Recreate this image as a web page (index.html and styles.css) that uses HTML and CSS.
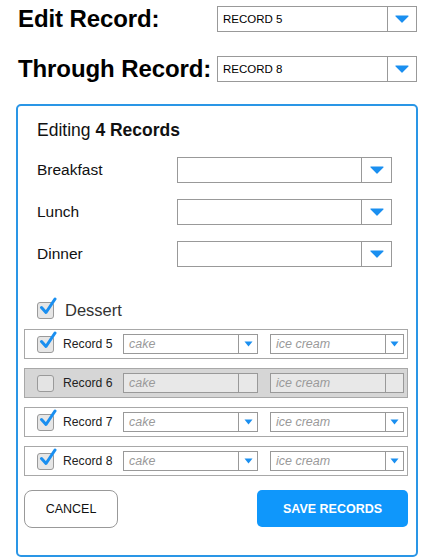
FILE: index.html
```html
<!DOCTYPE html>
<html>
<head>
<meta charset="utf-8">
<link rel="stylesheet" href="styles.css">
</head>
<body>
<div class="top">
  <div class="top-row">
    <div class="top-label">Edit Record:</div>
    <div class="select big"><span class="value">RECORD 5</span><span class="btn"><svg width="14" height="8" viewBox="0 0 14 8"><path d="M1 1 H13 L7 7 Z" fill="#1a8ff0" stroke="#1a8ff0" stroke-linejoin="round" stroke-width="1.2"/></svg></span></div>
  </div>
  <div class="top-row">
    <div class="top-label">Through Record:</div>
    <div class="select big"><span class="value">RECORD 8</span><span class="btn"><svg width="14" height="8" viewBox="0 0 14 8"><path d="M1 1 H13 L7 7 Z" fill="#1a8ff0" stroke="#1a8ff0" stroke-linejoin="round" stroke-width="1.2"/></svg></span></div>
  </div>
</div>

<div class="panel">
  <div class="title">Editing <b>4 Records</b></div>

  <div class="form">
    <div class="form-row">
      <div class="form-label">Breakfast</div>
      <div class="select mid"><span class="value"></span><span class="btn"><svg width="14" height="8" viewBox="0 0 14 8"><path d="M1 1 H13 L7 7 Z" fill="#1a8ff0" stroke="#1a8ff0" stroke-linejoin="round" stroke-width="1.2"/></svg></span></div>
    </div>
    <div class="form-row">
      <div class="form-label">Lunch</div>
      <div class="select mid"><span class="value"></span><span class="btn"><svg width="14" height="8" viewBox="0 0 14 8"><path d="M1 1 H13 L7 7 Z" fill="#1a8ff0" stroke="#1a8ff0" stroke-linejoin="round" stroke-width="1.2"/></svg></span></div>
    </div>
    <div class="form-row">
      <div class="form-label">Dinner</div>
      <div class="select mid"><span class="value"></span><span class="btn"><svg width="14" height="8" viewBox="0 0 14 8"><path d="M1 1 H13 L7 7 Z" fill="#1a8ff0" stroke="#1a8ff0" stroke-linejoin="round" stroke-width="1.2"/></svg></span></div>
    </div>
  </div>

  <div class="dessert">
    <span class="cb checked"><svg class="tick" width="18" height="19" viewBox="0 0 18 19"><path d="M2.5 10.5 L7 15.5 L16 2" fill="none" stroke="#1a8ff0" stroke-width="3" stroke-linecap="round" stroke-linejoin="round"/></svg></span>
    <span class="dessert-label">Dessert</span>
  </div>

  <div class="records">
    <div class="rec">
      <span class="cb checked"><svg class="tick" width="18" height="19" viewBox="0 0 18 19"><path d="M2.5 10.5 L7 15.5 L16 2" fill="none" stroke="#1a8ff0" stroke-width="3" stroke-linecap="round" stroke-linejoin="round"/></svg></span>
      <span class="rec-label">Record 5</span>
      <div class="select small s1"><span class="value ph">cake</span><span class="btn"><svg width="9" height="6" viewBox="0 0 9 6"><path d="M0.5 0.5 H8.5 L4.5 5.5 Z" fill="#1a8ff0"/></svg></span></div>
      <div class="select small s2"><span class="value ph">ice cream</span><span class="btn"><svg width="9" height="6" viewBox="0 0 9 6"><path d="M0.5 0.5 H8.5 L4.5 5.5 Z" fill="#1a8ff0"/></svg></span></div>
    </div>
    <div class="rec disabled">
      <span class="cb"></span>
      <span class="rec-label">Record 6</span>
      <div class="select small s1"><span class="value ph">cake</span><span class="btn"></span></div>
      <div class="select small s2"><span class="value ph">ice cream</span><span class="btn"></span></div>
    </div>
    <div class="rec">
      <span class="cb checked"><svg class="tick" width="18" height="19" viewBox="0 0 18 19"><path d="M2.5 10.5 L7 15.5 L16 2" fill="none" stroke="#1a8ff0" stroke-width="3" stroke-linecap="round" stroke-linejoin="round"/></svg></span>
      <span class="rec-label">Record 7</span>
      <div class="select small s1"><span class="value ph">cake</span><span class="btn"><svg width="9" height="6" viewBox="0 0 9 6"><path d="M0.5 0.5 H8.5 L4.5 5.5 Z" fill="#1a8ff0"/></svg></span></div>
      <div class="select small s2"><span class="value ph">ice cream</span><span class="btn"><svg width="9" height="6" viewBox="0 0 9 6"><path d="M0.5 0.5 H8.5 L4.5 5.5 Z" fill="#1a8ff0"/></svg></span></div>
    </div>
    <div class="rec">
      <span class="cb checked"><svg class="tick" width="18" height="19" viewBox="0 0 18 19"><path d="M2.5 10.5 L7 15.5 L16 2" fill="none" stroke="#1a8ff0" stroke-width="3" stroke-linecap="round" stroke-linejoin="round"/></svg></span>
      <span class="rec-label">Record 8</span>
      <div class="select small s1"><span class="value ph">cake</span><span class="btn"><svg width="9" height="6" viewBox="0 0 9 6"><path d="M0.5 0.5 H8.5 L4.5 5.5 Z" fill="#1a8ff0"/></svg></span></div>
      <div class="select small s2"><span class="value ph">ice cream</span><span class="btn"><svg width="9" height="6" viewBox="0 0 9 6"><path d="M0.5 0.5 H8.5 L4.5 5.5 Z" fill="#1a8ff0"/></svg></span></div>
    </div>
  </div>

  <div class="actions">
    <div class="button cancel">CANCEL</div>
    <div class="button save">SAVE RECORDS</div>
  </div>
</div>
</body>
</html>
```

FILE: styles.css
```css
* { box-sizing: border-box; }
html, body { margin: 0; padding: 0; background: #fff; }
body {
  font-family: "Liberation Sans", Arial, Helvetica, sans-serif;
  color: #111;
  width: 427px;
  height: 560px;
  overflow: hidden;
}

.top { padding: 6px 0 0 18px; display: flex; flex-direction: column; gap: 24px; }
.top-row { display: flex; align-items: center; height: 26px; }
.top-label {
  width: 199px;
  font-size: 24px;
  font-weight: bold;
  color: #000;
  white-space: nowrap;
  letter-spacing: -0.1px;
}

.select {
  display: flex;
  border: 1px solid #999;
  background: #fff;
}
.select .value {
  flex: 1;
  display: flex;
  align-items: center;
  overflow: hidden;
  white-space: nowrap;
}
.select .btn {
  display: flex;
  align-items: center;
  justify-content: center;
  border-left: 1px solid #999;
}
.select.big { width: 200px; height: 26px; }
.select.big .value { font-size: 11.5px; padding-left: 5px; color: #000; }
.select.big .btn { width: 29px; }

.panel {
  margin: 22px 0 0 16px;
  width: 402px;
  height: 453px;
  border: 2px solid #2a96e6;
  border-radius: 5px;
  padding: 13px 8px 0 6px;
}

.title { font-size: 17.5px; line-height: 22px; padding-left: 13px; color: #111; }
.title b { font-weight: bold; }

.form { margin-top: 16px; display: flex; flex-direction: column; gap: 16px; padding-left: 13px; }
.form-row { display: flex; align-items: center; height: 26px; }
.form-label { width: 140px; font-size: 15.5px; color: #111; }
.select.mid { width: 215px; height: 26px; }
.select.mid .btn { width: 30px; }

.cb {
  position: relative;
  display: inline-block;
  width: 17px;
  height: 17px;
  border: 1px solid #9a9a9a;
  border-radius: 3px;
  background: #e6e6e6;
  flex: none;
}
.cb .tick { position: absolute; left: 1px; top: -6px; }

.dessert {
  margin-top: 35px;
  padding-left: 13px;
  display: flex;
  align-items: center;
  height: 17px;
}
.dessert-label { margin-left: 11px; font-size: 16.5px; color: #333; }

.records { margin-top: 10px; display: flex; flex-direction: column; gap: 9px; }
.rec {
  display: flex;
  align-items: center;
  height: 30px;
  border: 1px solid #a8a8a8;
  padding-left: 12px;
  background: #fff;
}
.rec.disabled { background: #d6d6d6; }
.rec.disabled .cb { background: #e4e4e4; }
.rec-label { font-size: 12.2px; color: #222; margin-left: 9px; width: 60px; }
.select.small { height: 20px; }
.select.small .value { font-size: 12.5px; padding-left: 5px; }
.select.small .value.ph { color: #9a9a9a; font-style: italic; }
.select.s1 { width: 135px; }
.select.s1 .btn { width: 19px; }
.select.s2 { width: 134px; margin-left: 12px; }
.select.s2 .btn { width: 18px; }
.rec.disabled .select { background: #e8e8e8; }

.actions {
  margin-top: 14px;
  display: flex;
  justify-content: space-between;
}
.button {
  height: 38px;
  display: flex;
  align-items: center;
  justify-content: center;
  font-size: 12.5px;
}
.cancel {
  width: 94px;
  border: 1px solid #999;
  border-radius: 8px;
  color: #111;
  background: #fff;
}
.save {
  width: 151px;
  height: 37px;
  border-radius: 5px;
  background: #0f97fb;
  color: #fff;
  font-weight: bold;
}
```
